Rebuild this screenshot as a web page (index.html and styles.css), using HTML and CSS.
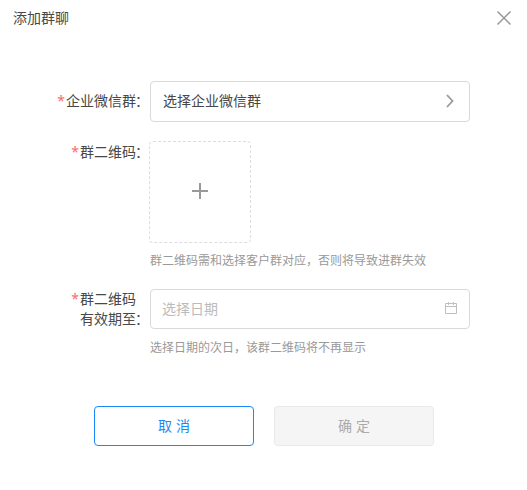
FILE: index.html
```html
<!DOCTYPE html>
<html lang="zh-CN">
<head>
<meta charset="utf-8">
<title>添加群聊</title>
<link rel="stylesheet" href="styles.css">
</head>
<body>
<div class="dialog">
  <header class="header">
    <h1 class="title">添加群聊</h1>
    <svg class="close" width="16" height="16" viewBox="0 0 16 16"><path d="M1.5 1.5l13 13M14.5 1.5l-13 13"/></svg>
  </header>
  <form class="form">
    <div class="row row-group">
      <div class="label"><span class="star">*</span><span>企业微信群<span class="colon">：</span></span></div>
      <div class="field select">
        <span>选择企业微信群</span>
        <svg class="chevron" width="10" height="14" viewBox="0 0 10 14"><path d="M2 1L7.5 7 2 13"/></svg>
      </div>
    </div>
    <div class="row row-code">
      <div class="label"><span class="star">*</span><span>群二维码<span class="colon">：</span></span></div>
      <div class="content">
        <div class="upload"><svg width="18" height="18" viewBox="0 0 18 18"><path d="M1 9h16M9 1v16"/></svg></div>
        <p class="hint">群二维码需和选择客户群对应，否则将导致进群失效</p>
      </div>
    </div>
    <div class="row">
      <div class="label"><span class="star">*</span><span>群二维码<br>有效期至<span class="colon">：</span></span></div>
      <div class="content">
        <div class="field date">
          <span>选择日期</span>
          <svg class="calendar" width="14" height="14" viewBox="0 0 14 14"><path d="M1.5 2.5h11v10h-11zM1.5 5.5h11M4.5 1v3M9.5 1v3"/></svg>
        </div>
        <p class="hint date-hint">选择日期的次日，该群二维码将不再显示</p>
      </div>
    </div>
  </form>
  <footer class="footer">
    <button class="button cancel" type="button">取 消</button>
    <button class="button confirm" type="button" disabled>确 定</button>
  </footer>
</div>
</body>
</html>
```

FILE: styles.css
```css
* { box-sizing: border-box; }
body {
  margin: 0;
  background: #fff;
  color: #484848;
  font: 14px/20px "Liberation Sans", "Noto Sans CJK SC", sans-serif;
}
.dialog { width: 527px; height: 490px; overflow: hidden; }
.header {
  display: flex;
  justify-content: space-between;
  height: 81px;
  padding: 8px 15px 0 13px;
}
.title { margin: 0; font-size: 14px; font-weight: 400; }
.close { margin-top: 2px; }
svg { display: block; fill: none; stroke: #999; stroke-width: 1.8; }
.close { stroke-width: 1.5; }
.form { display: flex; flex-direction: column; }
.row { display: flex; align-items: flex-start; }
.row-group { margin-bottom: 19px; }
.row-code { height: 130px; margin-bottom: 18px; }
.label {
  display: flex;
  flex: none;
  justify-content: flex-end;
  width: 150px;
  white-space: nowrap;
}
.row-group .label { padding-top: 10px; }
.row-code .label { padding-top: 1px; }
.star { margin-right: 1px; color: #f56c6c; font-family: "Noto Sans", sans-serif; }
.colon { position: relative; left: -1px; }
.field {
  display: flex;
  align-items: center;
  justify-content: space-between;
  width: 320px;
  height: 40px;
  border: 1px solid #d9d9d9;
  border-radius: 4px;
}
.select { height: 41px; padding: 0 14px 2px 12px; }
.date { padding: 0 11px; color: #bbb; }
.calendar { stroke: #bfbfbf; stroke-width: 1; margin-bottom: 2px; }
.upload {
  display: flex;
  align-items: center;
  justify-content: center;
  width: 102px;
  height: 102px;
  margin-left: -1px;
  padding-bottom: 2px;
  border: 1px dashed #ddd;
  border-radius: 4px;
}
.upload svg { stroke-width: 2; }
.hint { margin: 8px 0 0; color: #999; font-size: 12px; line-height: 20px; }
.date-hint { margin-top: 9px; }
.footer { display: flex; gap: 20px; padding: 48px 0 0 94px; }
.button {
  width: 160px;
  height: 40px;
  padding: 0;
  border: 1px solid #1989fa;
  border-radius: 4px;
  background: #fff;
  color: #1989fa;
  font: inherit;
}
.confirm { border-color: #e8e8e8; background: #f5f5f5; color: #aaa; }
```
